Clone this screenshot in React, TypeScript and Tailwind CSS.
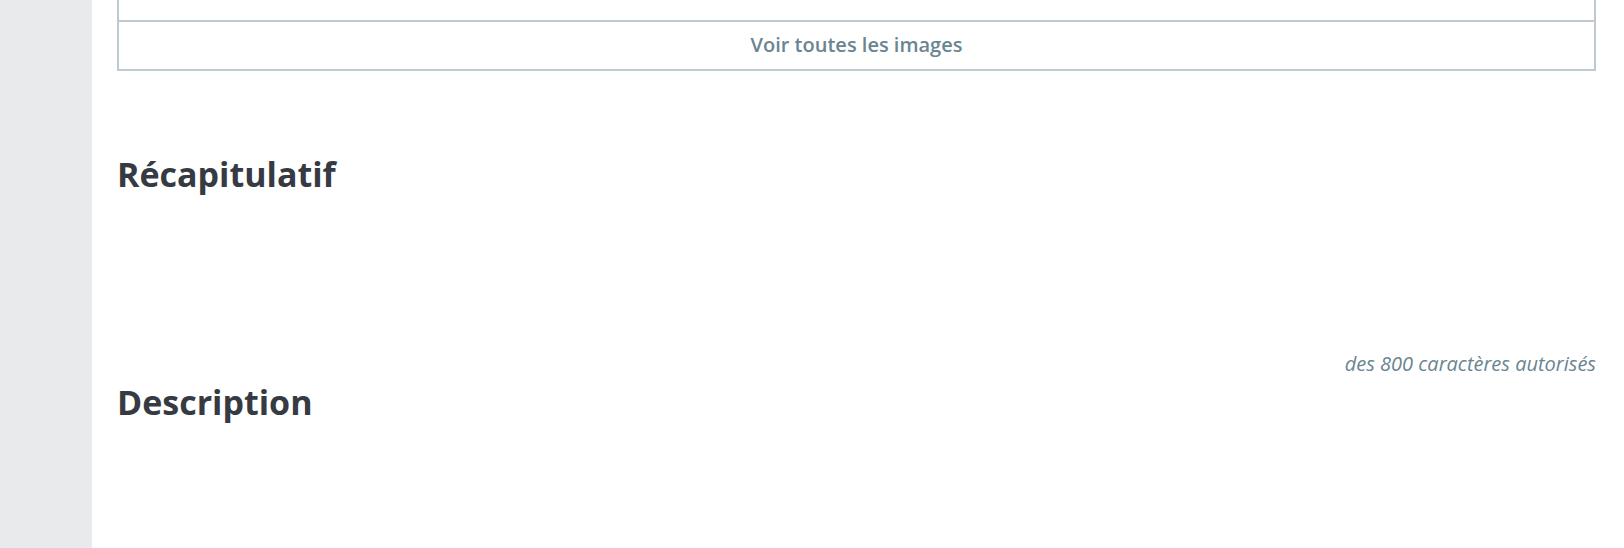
import React from "react";

export default function App() {
  return (
    <div className="flex h-[548px] w-[1624px] overflow-hidden bg-white" style={{ fontFamily: '"Open Sans", "Noto Sans", sans-serif' }}>
      <aside className="w-[92px] shrink-0 bg-[#e9eaeb]" />
      <main className="flex-1 pl-[25px] pr-[28px]">
        <div className="border-x-2 border-b-2 border-[#bccbd2]">
          <div className="h-[22px] border-b-2 border-[#bccbd2]" />
          <button className="flex h-[47px] w-full items-center justify-center pb-[2px] text-[20px] font-semibold leading-[28px] text-[#6a8591]">
            Voir toutes les images
          </button>
        </div>
        <h2 className="mt-[83px] text-[34px] font-bold leading-[40px] text-[#363a42]">Récapitulatif</h2>
        <div className="mt-[156px] text-right text-[20px] italic leading-[28px] text-[#6a8591]">des 800 caractères autorisés</div>
        <h2 className="mt-[4px] text-[34px] font-bold leading-[40px] text-[#363a42]">Description</h2>
      </main>
    </div>
  );
}
